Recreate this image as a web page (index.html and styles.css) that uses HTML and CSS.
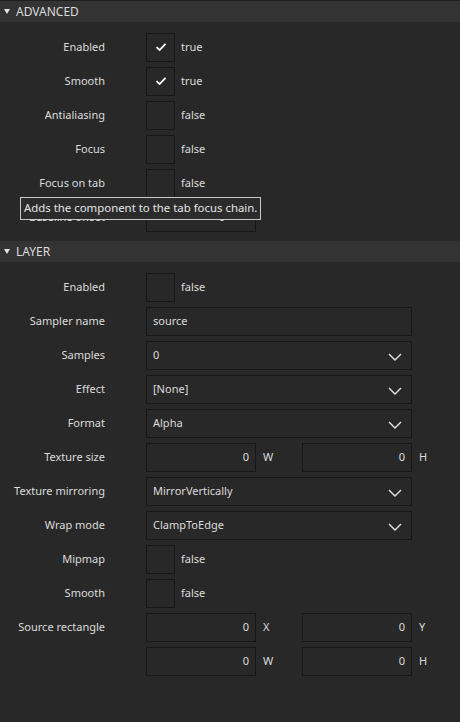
FILE: index.html
```html
<!DOCTYPE html>
<html>
<head>
<meta charset="utf-8">
<link rel="stylesheet" href="styles.css">
</head>
<body>
<div class="panel">
  <section class="section">
    <div class="head"><span class="tri"></span>ADVANCED</div>
    <div class="body">
      <div class="row"><div class="label">Enabled</div><div class="ctl"><span class="cb"><svg viewBox="0 0 12 10" width="12" height="10"><path d="M1.5 5.2 L4.6 8 L10.5 1.8" fill="none" stroke="#fff" stroke-width="1.8"/></svg></span><span class="val">true</span></div></div>
      <div class="row"><div class="label">Smooth</div><div class="ctl"><span class="cb"><svg viewBox="0 0 12 10" width="12" height="10"><path d="M1.5 5.2 L4.6 8 L10.5 1.8" fill="none" stroke="#fff" stroke-width="1.8"/></svg></span><span class="val">true</span></div></div>
      <div class="row"><div class="label">Antialiasing</div><div class="ctl"><span class="cb"></span><span class="val">false</span></div></div>
      <div class="row"><div class="label">Focus</div><div class="ctl"><span class="cb"></span><span class="val">false</span></div></div>
      <div class="row"><div class="label">Focus on tab</div><div class="ctl"><span class="cb"></span><span class="val">false</span></div></div>
      <div class="row"><div class="label">Baseline offset</div><div class="ctl"><span class="field half num spin">0<span class="spinarrow"></span></span></div></div>
    </div>
    <div class="tooltip">Adds the component to the tab focus chain.</div>
  </section>
  <section class="section">
    <div class="head"><span class="tri"></span>LAYER</div>
    <div class="body">
      <div class="row"><div class="label">Enabled</div><div class="ctl"><span class="cb"></span><span class="val">false</span></div></div>
      <div class="row"><div class="label">Sampler name</div><div class="ctl"><span class="field wide">source</span></div></div>
      <div class="row"><div class="label">Samples</div><div class="ctl"><span class="field wide combo">0<svg class="chev" viewBox="0 0 14 8" width="14" height="8"><path d="M1 1 L7 7 L13 1" fill="none" stroke="#e6e6e6" stroke-width="1.4"/></svg></span></div></div>
      <div class="row"><div class="label">Effect</div><div class="ctl"><span class="field wide combo">[None]<svg class="chev" viewBox="0 0 14 8" width="14" height="8"><path d="M1 1 L7 7 L13 1" fill="none" stroke="#e6e6e6" stroke-width="1.4"/></svg></span></div></div>
      <div class="row"><div class="label">Format</div><div class="ctl"><span class="field wide combo">Alpha<svg class="chev" viewBox="0 0 14 8" width="14" height="8"><path d="M1 1 L7 7 L13 1" fill="none" stroke="#e6e6e6" stroke-width="1.4"/></svg></span></div></div>
      <div class="row"><div class="label">Texture size</div><div class="ctl"><span class="field half num">0</span><span class="unit">W</span><span class="field half num">0</span><span class="unit">H</span></div></div>
      <div class="row"><div class="label">Texture mirroring</div><div class="ctl"><span class="field wide combo">MirrorVertically<svg class="chev" viewBox="0 0 14 8" width="14" height="8"><path d="M1 1 L7 7 L13 1" fill="none" stroke="#e6e6e6" stroke-width="1.4"/></svg></span></div></div>
      <div class="row"><div class="label">Wrap mode</div><div class="ctl"><span class="field wide combo">ClampToEdge<svg class="chev" viewBox="0 0 14 8" width="14" height="8"><path d="M1 1 L7 7 L13 1" fill="none" stroke="#e6e6e6" stroke-width="1.4"/></svg></span></div></div>
      <div class="row"><div class="label">Mipmap</div><div class="ctl"><span class="cb"></span><span class="val">false</span></div></div>
      <div class="row"><div class="label">Smooth</div><div class="ctl"><span class="cb"></span><span class="val">false</span></div></div>
      <div class="row"><div class="label">Source rectangle</div><div class="ctl"><span class="field half num">0</span><span class="unit">X</span><span class="field half num">0</span><span class="unit">Y</span></div></div>
      <div class="row"><div class="label"></div><div class="ctl"><span class="field half num">0</span><span class="unit">W</span><span class="field half num">0</span><span class="unit">H</span></div></div>
    </div>
  </section>
</div>
</body>
</html>
```
FILE: styles.css
```css
html, body {
  margin: 0;
  padding: 0;
  background: #282828;
}
body {
  font-family: "Noto Sans", "Open Sans", sans-serif;
  font-size: 11px;
  color: #dcdcdc;
  width: 460px;
  height: 722px;
  overflow: hidden;
}
.panel {
  border-top: 1px solid #1e1e1e;
}
.section {
  position: relative;
}
.head {
  height: 21px;
  background: #333333;
  display: flex;
  align-items: center;
  padding-left: 4px;
  font-size: 12px;
  color: #dcdcdc;
}
.tri {
  width: 0;
  height: 0;
  border-left: 3.5px solid transparent;
  border-right: 3.5px solid transparent;
  border-top: 5px solid #e0e0e0;
  margin-right: 6px;
}
.body {
  padding: 8px 0 7px 0;
}
.row {
  height: 34px;
  display: grid;
  grid-template-columns: 105px 1fr;
  column-gap: 41px;
  align-items: center;
}
.label {
  text-align: right;
  white-space: nowrap;
  padding-bottom: 2px;
}
.ctl {
  display: flex;
  align-items: center;
}
.cb {
  width: 27px;
  height: 27px;
  border: 1px solid #171717;
  display: flex;
  align-items: center;
  justify-content: center;
}
.val {
  margin-left: 6px;
  padding-bottom: 2px;
}
.field {
  box-sizing: border-box;
  height: 29px;
  border: 1px solid #171717;
  display: flex;
  align-items: center;
  padding: 0 6px 2px 6px;
  white-space: nowrap;
  position: relative;
}
.wide {
  width: 266px;
}
.half {
  width: 110px;
}
.num {
  justify-content: flex-end;
}
.combo .chev {
  position: absolute;
  right: 9px;
  top: 11px;
}
.spin {
  padding-right: 30px;
}
.spinarrow {
  position: absolute;
  right: 12px;
  top: 12px;
  width: 0;
  height: 0;
  border-left: 3px solid transparent;
  border-right: 3px solid transparent;
  border-top: 4px solid #dcdcdc;
}
.unit {
  width: 46px;
  padding-left: 7px;
  padding-bottom: 2px;
  box-sizing: border-box;
}
.tooltip {
  position: absolute;
  left: 20px;
  top: 196px;
  height: 21px;
  padding: 0 3px;
  border: 1px solid #c8c8c8;
  background: #2b2b2b;
  color: #e6e6e6;
  font-size: 11.4px;
  line-height: 20px;
  white-space: nowrap;
}
```
